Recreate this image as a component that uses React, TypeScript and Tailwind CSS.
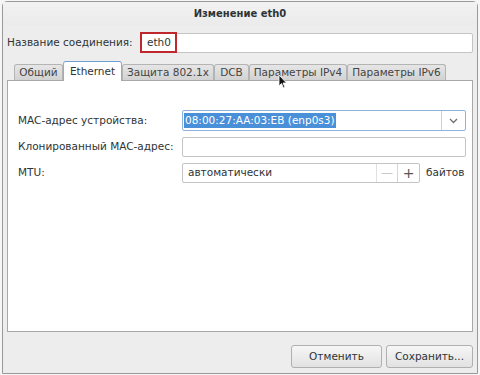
import React from "react";

const font = { fontFamily: '"DejaVu Sans", "Noto Sans", sans-serif' };

function Tab({ label, active, w }: { label: string; active?: boolean; w: string }) {
  if (active) {
    return (
      <div
        className={`${w} relative z-10 -mb-px flex h-[20px] items-center justify-center rounded-t-[3px] border border-b-0 border-[#a8a8a8] border-t-[#6f9fd6] bg-white text-[10.5px] text-[#2e3436]`}
      >
        {label}
      </div>
    );
  }
  return (
    <div
      className={`${w} mt-[3px] flex h-[16px] items-center justify-center rounded-t-[3px] border border-b-0 border-[#b4b4b4] bg-gradient-to-b from-[#e6e6e6] to-[#d2d2d2] text-[10.5px] text-[#444]`}
    >
      {label}
    </div>
  );
}

export default function App() {
  return (
    <div className="relative h-[375px] w-[480px] overflow-hidden bg-[#f6f6f6]" style={font}>
      <div className="absolute left-[2px] top-[1px] flex h-[373px] w-[476px] flex-col rounded-t-[5px] border border-[#9a9a9a] bg-[#ededed]">
        {/* title */}
        <div className="flex h-[23px] items-center justify-center bg-gradient-to-b from-[#f2f2f2] to-[#ebebeb] text-[10px] font-bold text-[#2e3436]">
          Изменение eth0
        </div>
        {/* name row */}
        <div className="mt-[8px] flex h-[20px] items-center pl-[4px] pr-[4px]">
          <span className="w-[133px] text-[10.5px] text-[#2e3436]">Название соединения:</span>
          <div className="flex h-[20px] flex-1 items-center rounded-[2px] border border-[#c4c4c4] bg-white pl-[6px] text-[10.5px] text-[#2e3436]">
            eth0
          </div>
        </div>
        {/* tabs */}
        <div className="mt-[8px] flex items-end pl-[11px]">
          <Tab label="Общий" w="w-[49px]" />
          <Tab label="Ethernet" w="w-[59px]" active />
          <Tab label="Защита 802.1x" w="w-[92px]" />
          <Tab label="DCB" w="w-[35px]" />
          <Tab label="Параметры IPv4" w="w-[98px]" />
          <Tab label="Параметры IPv6" w="w-[99px]" />
        </div>
        {/* panel */}
        <div className="mx-[4px] flex h-[252px] flex-col border border-[#a8a8a8] bg-white pl-[10px] pr-[6px] pt-[29px]">
          <div className="flex h-[21px] items-center">
            <span className="w-[164px] text-[10.5px] text-[#2e3436]">MAC-адрес устройства:</span>
            <div className="flex h-[21px] flex-1 items-center rounded-[2px] border border-[#8fb3dc] bg-white">
              <div className="flex flex-1 items-center pl-[1px]">
                <span className="bg-[#4a90d9] px-[1px] text-[10.5px] leading-[15px] text-white">
                  08:00:27:AA:03:EB (enp0s3)
                </span>
              </div>
              <div className="flex h-full w-[24px] items-center justify-center border-l border-[#d0d0d0]">
                <svg width="9" height="6" viewBox="0 0 9 6">
                  <path d="M1 1 L4.5 4.5 L8 1" fill="none" stroke="#707070" strokeWidth="1.3" />
                </svg>
              </div>
            </div>
          </div>
          <div className="mt-[6px] flex h-[20px] items-center">
            <span className="w-[164px] text-[10.5px] text-[#2e3436]">Клонированный MAC-адрес:</span>
            <div className="h-[20px] flex-1 rounded-[2px] border border-[#c4c4c4] bg-white" />
          </div>
          <div className="mt-[6px] flex h-[20px] items-center">
            <span className="w-[164px] text-[10.5px] text-[#2e3436]">MTU:</span>
            <div className="flex h-[20px] w-[238px] items-center rounded-[2px] border border-[#c4c4c4] bg-white">
              <span className="flex-1 pl-[5px] text-[10.5px] text-[#2e3436]">автоматически</span>
              <div className="flex h-full w-[21px] items-center justify-center border-l border-[#e0e0e0] text-[12px] text-[#c8c8c8]">
                —
              </div>
              <div className="flex h-full w-[22px] items-center justify-center border-l border-[#d6d6d6] text-[14px] text-[#555]">
                +
              </div>
            </div>
            <span className="ml-[6px] text-[10.5px] text-[#2e3436]">байтов</span>
          </div>
        </div>
        {/* buttons */}
        <div className="mt-[13px] flex justify-end gap-[4px] pr-[4px]">
          <div className="flex h-[23px] w-[91px] items-center justify-center rounded-[3px] border border-[#b0b0b0] bg-gradient-to-b from-[#f6f6f6] to-[#e2e2e2] text-[10.5px] text-[#2e3436]">
            Отменить
          </div>
          <div className="flex h-[23px] w-[87px] items-center justify-center rounded-[3px] border border-[#b0b0b0] bg-gradient-to-b from-[#f6f6f6] to-[#e2e2e2] text-[10.5px] text-[#2e3436]">
            Сохранить...
          </div>
        </div>
      </div>
      {/* red annotation box */}
      <div className="absolute left-[140px] top-[32px] h-[21px] w-[37px] border-2 border-[#c0272d]" />
      {/* mouse cursor */}
      <svg className="absolute left-[278px] top-[74px]" width="10" height="15" viewBox="0 0 10 15">
        <path d="M1 1 L1 12 L3.5 9.5 L5.5 14 L7 13.3 L5 9 L8.5 9 Z" fill="#111" stroke="#fff" strokeWidth="0.8" />
      </svg>
    </div>
  );
}
